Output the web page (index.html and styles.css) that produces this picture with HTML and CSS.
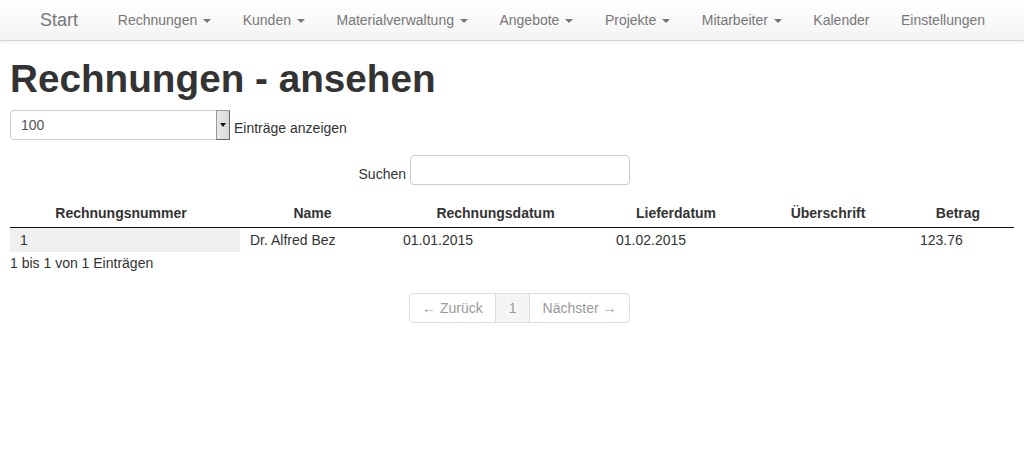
FILE: index.html
```html
<!DOCTYPE html>
<html lang="de">
<head>
<meta charset="utf-8">
<title>Rechnungen - ansehen</title>
<link rel="stylesheet" href="styles.css">
</head>
<body>
<nav class="navbar">
  <div class="nav-inner">
    <a class="brand" href="#">Start</a>
    <ul class="nav">
      <li><a href="#">Rechnungen <span class="caret"></span></a></li>
      <li><a href="#">Kunden <span class="caret"></span></a></li>
      <li><a href="#">Materialverwaltung <span class="caret"></span></a></li>
      <li><a href="#">Angebote <span class="caret"></span></a></li>
      <li><a href="#">Projekte <span class="caret"></span></a></li>
      <li><a href="#">Mitarbeiter <span class="caret"></span></a></li>
      <li><a href="#">Kalender</a></li>
      <li><a href="#">Einstellungen</a></li>
    </ul>
  </div>
</nav>
<main class="content">
  <h1 class="title">Rechnungen - ansehen</h1>
  <div class="length-row">
    <div class="select">
      <span class="select-value">100</span>
      <span class="select-btn"><span class="select-arrow"></span></span>
    </div>
    <span class="length-label">Einträge anzeigen</span>
  </div>
  <div class="controls search-row">
    <label class="search-label">Suchen</label>
    <input class="search-input" type="text">
  </div>
  <table class="data">
    <colgroup>
      <col class="c1"><col class="c2"><col class="c3"><col class="c4"><col class="c5"><col class="c6">
    </colgroup>
    <thead>
      <tr>
        <th>Rechnungsnummer</th>
        <th>Name</th>
        <th>Rechnungsdatum</th>
        <th>Lieferdatum</th>
        <th>Überschrift</th>
        <th>Betrag</th>
      </tr>
    </thead>
    <tbody>
      <tr>
        <td class="sorted">1</td>
        <td>Dr. Alfred Bez</td>
        <td>01.01.2015</td>
        <td>01.02.2015</td>
        <td></td>
        <td>123.76</td>
      </tr>
    </tbody>
  </table>
  <div class="info">1 bis 1 von 1 Einträgen</div>
  <div class="controls pager-row">
    <ul class="pager">
      <li class="pg">← Zurück</li>
      <li class="pg pg-cur">1</li>
      <li class="pg">Nächster →</li>
    </ul>
  </div>
</main>
</body>
</html>
```
FILE: styles.css
```css
* { box-sizing: border-box; }
body {
  margin: 0;
  font-family: "Liberation Sans", Arial, sans-serif;
  font-size: 14px;
  line-height: 20px;
  color: #333;
  background: #fff;
}
.navbar {
  height: 41px;
  background: linear-gradient(to bottom, #ffffff 0%, #f4f4f4 100%);
  border-bottom: 1px solid #d4d4d4;
  box-shadow: 0 1px 6px rgba(0,0,0,0.08);
}
.nav-inner {
  display: flex;
  align-items: center;
  height: 40px;
  padding-left: 25px;
}
.brand {
  font-size: 18px;
  color: #777;
  text-decoration: none;
  padding: 0 15px;
  margin-right: 9px;
}
.nav {
  display: flex;
  list-style: none;
  margin: 0;
  padding: 0;
}
.nav a {
  display: block;
  padding: 0 15.8px;
  color: #777;
  text-decoration: none;
  line-height: 40px;
}
.caret {
  display: inline-block;
  width: 0;
  height: 0;
  margin-left: 2px;
  vertical-align: middle;
  border-top: 4px solid #777;
  border-left: 4px solid transparent;
  border-right: 4px solid transparent;
}
.content {
  padding: 0 10px;
}
.title {
  font-size: 38.7px;
  font-weight: bold;
  line-height: 1.1;
  margin: 17px 0 9px;
  color: #333;
}
.length-row {
  display: flex;
  align-items: center;
  height: 30px;
}
.select {
  width: 220px;
  height: 30px;
  border: 1px solid #ccc;
  border-radius: 4px 2px 2px 4px;
  display: flex;
  align-items: stretch;
  background: #fff;
}
.select-value {
  flex: 1;
  padding-left: 10px;
  line-height: 28px;
  color: #555;
}
.select-btn {
  width: 14px;
  margin: -1px -1px -1px 0;
  background: linear-gradient(to right, #e8e8e8, #d8d8d8);
  border: 1px solid #9a9a9a;
  border-right-color: #666;
  border-bottom-color: #666;
  border-radius: 1px;
  display: flex;
  align-items: center;
  justify-content: center;
}
.select-arrow {
  width: 0;
  height: 0;
  border-top: 4px solid #111;
  border-left: 3px solid transparent;
  border-right: 3px solid transparent;
}
.length-label {
  margin-left: 4px;
  margin-top: 6px;
}
.controls {
  width: 620px;
  display: flex;
  justify-content: flex-end;
}
.search-row {
  margin-top: 15px;
  align-items: center;
}
.search-label {
  margin-right: 4px;
  margin-top: 8px;
}
.search-input {
  width: 220px;
  height: 30px;
  border: 1px solid #ccc;
  border-radius: 4px;
  font: inherit;
  padding: 0 10px;
}
.data {
  width: 1004px;
  table-layout: fixed;
  border-collapse: collapse;
  margin-top: 10px;
}
.c1 { width: 230px; }
.c2 { width: 153px; }
.c3 { width: 213px; }
.c4 { width: 148px; }
.c5 { width: 156px; }
.c6 { width: 104px; }
.data th {
  font-weight: bold;
  text-align: center;
  padding: 8px 18px 4px 10px;
  border-bottom: 1px solid #111;
}
.data td {
  padding: 2px 10px;
  text-align: left;
}
.data td.sorted {
  background: #efefef;
}
.info {
  margin-top: 1px;
}
.pager-row {
  margin-top: 20px;
}
.pager {
  display: flex;
  list-style: none;
  margin: 0;
  padding: 0;
}
.pg {
  padding: 4px 12.5px;
  line-height: 20px;
  color: #999;
  border: 1px solid #ddd;
  margin-left: -1px;
  background: #fff;
}
.pg:first-child {
  margin-left: 0;
  border-radius: 4px 0 0 4px;
}
.pg:last-child {
  border-radius: 0 4px 4px 0;
}
.pg-cur {
  background: #f5f5f5;
}
```
